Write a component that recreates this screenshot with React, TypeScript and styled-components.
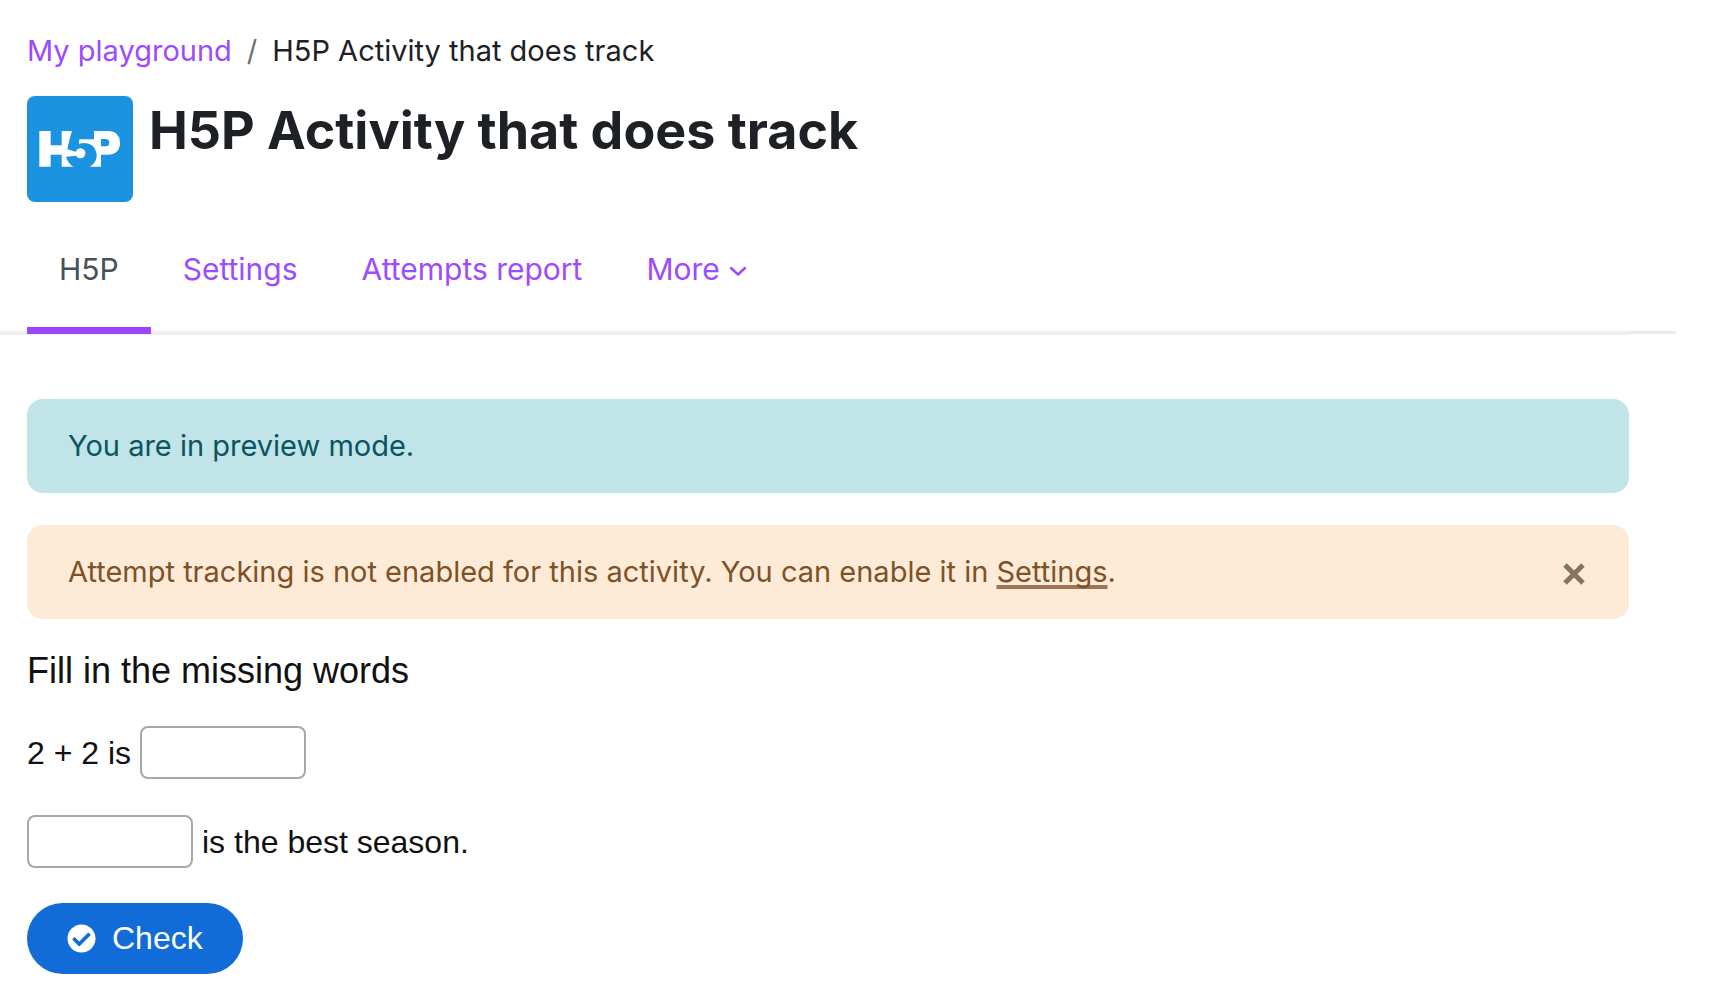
import React from 'react';
import styled, { createGlobalStyle } from 'styled-components';
import { FaCheckCircle } from 'react-icons/fa';

const GlobalStyle = createGlobalStyle`
  *, *::before, *::after { box-sizing: border-box; }
  body {
    margin: 0;
    background: #fff;
    color: #1d2125;
    font: 400 29px/44px Inter, "Liberation Sans", sans-serif;
  }
`;

const Page = styled.main`
  padding: 29px 56px 12px 0;
`;

const Section = styled.div`
  padding: 0 47px 0 27px;
`;

const Breadcrumb = styled.ol`
  display: flex;
  margin: 0 0 23px;
  padding: 0;
  list-style: none;
`;

const Crumb = styled.li`
  & + &::before {
    content: "/";
    padding: 0 15px;
    color: #6a737b;
  }
`;

const TextLink = styled.a`
  color: #9d4bff;
  text-decoration: none;
`;

const Header = styled.header`
  display: flex;
  align-items: flex-start;
  gap: 16px;
`;

const Logo = styled.svg`
  flex: none;
  width: 106px;
  height: 106px;
  border-radius: 8px;
  background: #1b93e1;
`;

const Title = styled.h1`
  margin: 0;
  font-size: 52px;
  font-weight: 700;
  line-height: 70px;
`;

const Nav = styled.nav`
  display: flex;
  align-items: stretch;
  margin: 9px 0 64px;
  font-size: 30px;

  &::after {
    content: "";
    width: 47px;
    margin-bottom: 1px;
    border-bottom: 3px solid #e9ecef;
  }
`;

const TabList = styled.ul`
  display: flex;
  flex: 1;
  margin: 0;
  padding: 0 0 0 27px;
  list-style: none;
  border-bottom: 4px solid #eef0f3;
`;

const Tab = styled.a<{ $active?: boolean }>`
  display: flex;
  align-items: center;
  gap: 9px;
  margin-bottom: -3px;
  padding: 36px 32px;
  border-bottom: 7px solid ${(p) => (p.$active ? '#9b45ff' : 'transparent')};
  color: ${(p) => (p.$active ? '#495057' : '#9d4bff')};
  text-decoration: none;
`;

const Chevron = styled.svg`
  width: 18px;
  height: 12px;
  margin-top: 4px;
`;

const tones = {
  info: { background: '#c0e4e7', color: '#0b5560' },
  warning: { background: '#feebd7', color: '#7d5227' },
};

const Alert = styled.div<{ $tone: keyof typeof tones }>`
  display: flex;
  align-items: center;
  justify-content: space-between;
  padding: 25px 41px;
  border-radius: 16px;
  background: ${(p) => tones[p.$tone].background};
  color: ${(p) => tones[p.$tone].color};

  & + & { margin-top: 32px; }
`;

const AlertLink = styled.a`
  color: inherit;
  text-decoration: underline 4px #9f7454;
  text-decoration-skip-ink: none;
  text-underline-offset: 3px;
`;

const CloseButton = styled.button`
  display: flex;
  padding: 6px 3px 3px;
  border: 0;
  background: none;
  color: #85745f;
  cursor: pointer;
`;

const Exercise = styled.form`
  margin-top: 28px;
  color: #111;
  font: 400 32px/44px "Liberation Sans", Arial, sans-serif;
`;

const Instruction = styled.p`
  margin: 0 0 31px;
  font-size: 36px;
  line-height: 48px;
`;

const Question = styled.label`
  display: flex;
  align-items: center;
  gap: 9px;
  margin-bottom: 36px;
`;

const Blank = styled.input`
  width: 166px;
  height: 53px;
  padding: 4px 12px;
  border: 2px solid #a8a8a8;
  border-radius: 8px;
  background: #fff;
  font: inherit;
`;

const CheckButton = styled.button`
  display: flex;
  align-items: center;
  gap: 16px;
  margin-top: -1px;
  padding: 13px 40px 14px;
  border: 0;
  border-radius: 36px;
  background: #116cd7;
  color: #fff;
  font: inherit;
  cursor: pointer;

  svg { width: 29px; height: 29px; }
`;

const H5PLogo = () => (
  <Logo viewBox="0 0 318 318" aria-label="H5P" role="img">
    <g transform="translate(9 70)" fill="#fff">
      <path d="M28 35H62V78H95V35H126Q118 58 112 90L137 97A15 15 0 1 1 138 109L108 112Q114 132 130 142H95V106H62V142H28Z" />
      <path d="M148 60H192V35H238Q270 38 270 70Q270 105 232 106H213V142H180Q202 128 200 104Q195 72 162 71L147 73ZM213 59V81H228Q238 79 238 70Q238 59 226 59Z" fillRule="evenodd" />
    </g>
  </Logo>
);

export default function App() {
  return (
    <>
      <GlobalStyle />
      <Page>
        <Section>
          <Breadcrumb>
            <Crumb><TextLink href="#playground">My playground</TextLink></Crumb>
            <Crumb>H5P Activity that does track</Crumb>
          </Breadcrumb>
          <Header>
            <H5PLogo />
            <Title>H5P Activity that does track</Title>
          </Header>
        </Section>
        <Nav>
          <TabList>
            <li><Tab href="#h5p" $active>H5P</Tab></li>
            <li><Tab href="#settings">Settings</Tab></li>
            <li><Tab href="#report">Attempts report</Tab></li>
            <li>
              <Tab href="#more">
                More
                <Chevron viewBox="0 0 18 12" fill="none" stroke="currentColor" strokeWidth="2.5" strokeLinecap="round" strokeLinejoin="round" aria-hidden="true">
                  <path d="M2 3L9 9.5L16 3" />
                </Chevron>
              </Tab>
            </li>
          </TabList>
        </Nav>
        <Section>
          <Alert $tone="info" role="status">You are in preview mode.</Alert>
          <Alert $tone="warning" role="alert">
            <span>
              Attempt tracking is not enabled for this activity. You can enable it in{' '}
              <AlertLink href="#settings">Settings</AlertLink>.
            </span>
            <CloseButton type="button" aria-label="Dismiss">
              <svg width="22" height="22" viewBox="0 0 22 22" stroke="currentColor" strokeWidth="5" aria-hidden="true">
                <path d="M2 2L20 20M20 2L2 20" />
              </svg>
            </CloseButton>
          </Alert>
          <Exercise onSubmit={(e) => e.preventDefault()}>
            <Instruction>Fill in the missing words</Instruction>
            <Question>2 + 2 is <Blank type="text" /></Question>
            <Question><Blank type="text" /> is the best season.</Question>
            <CheckButton type="submit"><FaCheckCircle aria-hidden="true" />Check</CheckButton>
          </Exercise>
        </Section>
      </Page>
    </>
  );
}
